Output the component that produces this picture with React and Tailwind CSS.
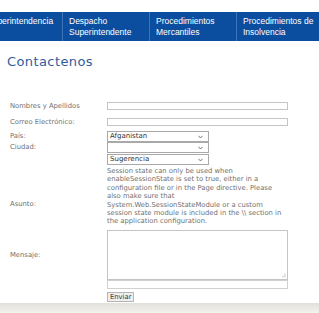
import React from "react";

const navItems = [
	{ label: "Superintendencia", w: "w-[81px]" },
	{ label: "Despacho Superintendente", w: "w-[87px]" },
	{ label: "Procedimientos Mercantiles", w: "w-[87px]" },
	{ label: "Procedimientos de Insolvencia", w: "w-[90px]" },
];

const Chevron = () => (
	<svg width="5" height="4" viewBox="0 0 5 4" className="shrink-0">
		<path d="M0.5 0.8 L2.5 3 L4.5 0.8" fill="none" stroke="#666" strokeWidth="0.9" />
	</svg>
);

const FakeSelect = ({ value }) => (
	<div className="w-[102px] h-[11px] border border-[#a9a9a9] bg-white flex items-center justify-between pl-[2px] pr-[5px] text-[7px] text-[#333]">
		<span>{value}</span>
		<Chevron />
	</div>
);

const Label = ({ children, className = "" }) => (
	<div className={"w-[97px] shrink-0 text-[6.8px] text-[#707070] " + className}>{children}</div>
);

const App = () => {
	return (
		<div className="w-[319px] h-[313px] bg-white overflow-hidden flex flex-col font-['DejaVu_Sans',Verdana,sans-serif]">
			<div className="h-[12px]" />
			{/* top menu */}
			<nav className="h-[29px] bg-[#0b4d9f] flex -ml-[19px] text-white text-[8.5px] leading-[11px] font-['Liberation_Sans',Arial,sans-serif]">
				{navItems.map((item, i) => (
					<div
						key={i}
						className={item.w + " shrink-0 pl-[6px] pr-[6px] pt-[4px] " + (i > 0 ? "border-l border-[#3f73b8]" : "")}
					>
						{item.label}
					</div>
				))}
			</nav>

			<h1 className="mt-[13px] ml-[7px] text-[13px] leading-[16px] tracking-[0.4px] text-[#2f5c9f]">Contactenos</h1>

			<div className="mt-[32px] pl-[10px] flex flex-col">
				<div className="flex items-center h-[8px]">
					<Label>Nombres y Apellidos</Label>
					<input className="w-[181px] h-[8px] border border-[#c4c4c4] bg-white" />
				</div>
				<div className="flex items-center h-[8px] mt-[8px]">
					<Label>Correo Electrónico:</Label>
					<input className="w-[181px] h-[8px] border border-[#c4c4c4] bg-white" />
				</div>
				<div className="flex items-center mt-[5px]">
					<Label>País:</Label>
					<FakeSelect value="Afganistan" />
				</div>
				<div className="flex items-center">
					<Label>Ciudad:</Label>
					<FakeSelect value="" />
				</div>
				<div className="flex items-start mt-[1px]">
					<Label className="pt-[45px]">Asunto:</Label>
					<div className="flex flex-col">
						<FakeSelect value="Sugerencia" />
						<p className="mt-[2px] text-[6.8px] leading-[8.4px] text-[#707070]">
							Session state can only be used when
							<br />
							enableSessionState is set to true, either in a
							<br />
							configuration file or in the Page directive. Please
							<br />
							also make sure that
							<br />
							System.Web.SessionStateModule or a custom
							<br />
							session state module is included in the \\ section in
							<br />
							the application configuration.
						</p>
					</div>
				</div>
				<div className="flex items-center mt-[4px]">
					<Label>Mensaje:</Label>
					<div className="relative">
						<textarea className="block w-[181px] h-[50px] border border-[#c4c4c4] bg-white resize-none" />
						{/* resize grip */}
						<svg width="5" height="5" viewBox="0 0 5 5" className="absolute right-[2px] bottom-[2px]">
							<rect x="3.5" y="0.5" width="1" height="4" fill="#c8c8c8" />
							<rect x="1.5" y="2.5" width="1" height="2" fill="#c8c8c8" />
						</svg>
					</div>
				</div>
				<div className="flex">
					<Label />
					<input className="w-[181px] h-[9px] border border-[#d0d0d0] bg-white" />
				</div>
				<div className="flex mt-[3px]">
					<Label />
					<button className="h-[10px] px-[2px] border border-[#b5b5b5] bg-[#efefef] text-[6.8px] leading-[8px] text-[#333]">
						Enviar
					</button>
				</div>
			</div>

			<div className="mt-auto h-[10px] bg-gradient-to-b from-[#e2e0da] to-[#f3f2ee]" />
		</div>
	);
};

export default App;
